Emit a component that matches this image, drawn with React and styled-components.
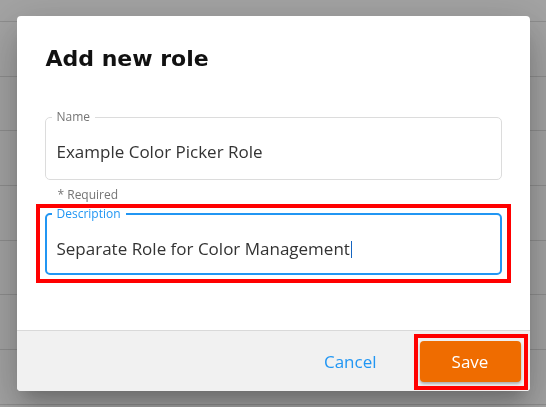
import React from "react";
import styled, { createGlobalStyle } from "styled-components";

const GlobalStyle = createGlobalStyle`
  html, body {
    margin: 0;
    padding: 0;
    background: #fff;
    font-family: "Open Sans", "Noto Sans", sans-serif;
  }
`;

const Page = styled.div`
  width: 100%;
  height: 407px;
  overflow: hidden;
`;

const HeaderRow = styled.div`
  height: 21px;
  border-bottom: 1px solid #dedede;
`;

const Row = styled.div`
  height: 53.7px;
  border-bottom: 1px solid #dedede;
`;

const Backdrop = styled.div`
  position: fixed;
  inset: 0;
  background: rgba(0, 0, 0, 0.36);
  display: flex;
  align-items: center;
  justify-content: center;
`;

const Dialog = styled.div`
  width: 513px;
  background: #fff;
  border-radius: 4px;
  box-shadow: 0 11px 15px -7px rgba(0, 0, 0, 0.2),
    0 24px 38px 3px rgba(0, 0, 0, 0.14), 0 9px 46px 8px rgba(0, 0, 0, 0.12);
  display: flex;
  flex-direction: column;
`;

const Body = styled.div`
  padding: 30px 28px 55px;
  display: flex;
  flex-direction: column;
`;

const Title = styled.h2`
  margin: 0 0 37px 1px;
  font-family: "DejaVu Sans", "Open Sans", sans-serif;
  font-size: 22px;
  line-height: 26px;
  font-weight: 700;
  color: #111;
`;

/* square red annotation frame drawn over a highlighted element */
const Marked = styled.div`
  position: relative;

  &::after {
    content: "";
    position: absolute;
    top: ${(p) => p.$top ?? -9}px;
    left: -9px;
    right: -9px;
    bottom: -8px;
    border: 4px solid #ff0000;
    pointer-events: none;
  }
`;

const Field = styled.fieldset`
  margin: 0;
  padding: 15px ${(p) => (p.$focused ? 10 : 11)}px
    ${(p) => (p.$focused ? 12 : 15)}px;
  border: ${(p) => (p.$focused ? "2px solid #2196f3" : "1px solid #dcdcdc")};
  border-radius: 5px;
  min-width: 0;
`;

const Legend = styled.legend`
  margin-left: -5px;
  padding: 0 5px;
  font-size: 12px;
  line-height: 16px;
  color: ${(p) => (p.$focused ? "#2196f3" : "#757575")};
`;

const Value = styled.div`
  font-size: 17px;
  line-height: 24px;
  color: #333;
  white-space: nowrap;
`;

const Caret = styled.span`
  display: inline-block;
  width: 1px;
  height: 17px;
  margin-left: 1px;
  vertical-align: -3px;
  background: #1565c0;
`;

const Helper = styled.div`
  margin: 7px 0 3px 13px;
  font-size: 12px;
  line-height: 16px;
  color: #757575;
`;

const Footer = styled.div`
  height: 59px;
  border-top: 1px solid #d9d9d9;
  background: #f1f1f1;
  border-radius: 0 0 4px 4px;
  display: flex;
  align-items: center;
  justify-content: flex-end;
  gap: 27px;
  padding: 1px 9px 0;
`;

const TextButton = styled.button`
  border: none;
  background: none;
  padding: 8px 16px;
  font-family: inherit;
  font-size: 17px;
  color: #2196f3;
  cursor: pointer;
`;

const SaveButton = styled.button`
  position: relative;
  width: 101px;
  height: 41px;
  border: none;
  border-radius: 4px;
  background: #ef6c00;
  color: #fff;
  font-family: inherit;
  font-size: 17px;
  box-shadow: 0 2px 3px rgba(0, 0, 0, 0.28);
  cursor: pointer;

  &::after {
    content: "";
    position: absolute;
    inset: -7px -7px -8px -6px;
    border: 4px solid #ff0000;
    pointer-events: none;
  }
`;

export default function App() {
  return (
    <Page>
      <GlobalStyle />
      <HeaderRow />
      {Array.from({ length: 7 }).map((_, i) => (
        <Row key={i} />
      ))}
      <Backdrop>
        <Dialog>
          <Body>
            <Title>Add new role</Title>
            <Field>
              <Legend>Name</Legend>
              <Value>Example Color Picker Role</Value>
            </Field>
            <Helper>* Required</Helper>
            <Marked $top={-2}>
              <Field $focused>
                <Legend $focused>Description</Legend>
                <Value>
                  Separate Role for Color Management
                  <Caret />
                </Value>
              </Field>
            </Marked>
          </Body>
          <Footer>
            <TextButton>Cancel</TextButton>
            <SaveButton>Save</SaveButton>
          </Footer>
        </Dialog>
      </Backdrop>
    </Page>
  );
}
